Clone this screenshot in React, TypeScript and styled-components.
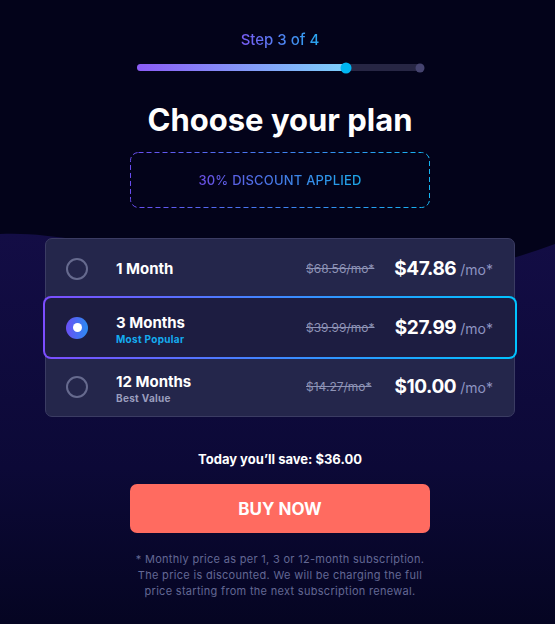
import React from 'react';
import styled, { createGlobalStyle } from 'styled-components';

const GlobalStyle = createGlobalStyle`
    html, body {
        margin: 0;
        padding: 0;
        background: #03031a;
    }
    * {
        box-sizing: border-box;
    }
`;

const Page = styled.div`
    position: relative;
    min-height: 624px;
    overflow: hidden;
    background: #03031a;
    font-family: Inter, 'Noto Sans', sans-serif;
    color: #ffffff;
`;

const Wave = styled.svg`
    position: absolute;
    left: 0;
    top: 0;
    width: 555px;
    height: 624px;
`;

const Content = styled.main`
    position: relative;
    display: flex;
    flex-direction: column;
    align-items: center;
    padding: 30px 0 0 5px;
`;

const StepLabel = styled.div`
    font-size: 15px;
    font-weight: 500;
    line-height: 20px;
    background: linear-gradient(90deg, #7a5cf5, #28a6ee);
    -webkit-background-clip: text;
    background-clip: text;
    -webkit-text-fill-color: transparent;
`;

const Track = styled.div`
    position: relative;
    width: 287px;
    height: 7px;
    margin-top: 14px;
    border-radius: 4px;
    background: #272644;
`;

const Fill = styled.div`
    height: 100%;
    border-radius: 4px;
    background: linear-gradient(90deg, #8b5cf6, #7dd0fb);
`;

const Knob = styled.span<{ $end?: boolean }>`
    position: absolute;
    top: 50%;
    width: ${({ $end }) => ($end ? '9px' : '11px')};
    height: ${({ $end }) => ($end ? '9px' : '11px')};
    border-radius: 50%;
    transform: translate(-50%, -50%);
    background: ${({ $end }) => ($end ? '#45436f' : '#00b6f2')};
`;

const Title = styled.h1`
    margin: 30px 0 0;
    font-size: 31px;
    line-height: 38px;
    font-weight: 700;
`;

const DiscountBox = styled.div`
    position: relative;
    width: 300px;
    height: 56px;
    margin-top: 13px;
    display: flex;
    align-items: center;
    justify-content: center;
`;

const DashedFrame = styled.svg`
    position: absolute;
    inset: 0;
    width: 100%;
    height: 100%;
`;

const DiscountText = styled.span`
    font-size: 13px;
    font-weight: 500;
    letter-spacing: 0.2px;
    background: linear-gradient(90deg, #6c4fe6, #1ca9ea);
    -webkit-background-clip: text;
    background-clip: text;
    -webkit-text-fill-color: transparent;
`;

const Plans = styled.div`
    width: 470px;
    margin-top: 30px;
    border: 1px solid #3b3c63;
    border-radius: 7px;
    background: #24264b;
    display: flex;
    flex-direction: column;
`;

const Row = styled.div<{ $selected?: boolean }>`
    display: grid;
    grid-template-columns: 22px 1fr 89px 98px;
    align-items: center;
    height: ${({ $selected }) => ($selected ? '63px' : '59px')};
    padding: 0 21px 0 20px;
    ${({ $selected }) =>
        $selected &&
        `
        margin: -2px -3px;
        padding: 0 22px 0 21px;
        border: 2px solid transparent;
        border-radius: 8px;
        background:
            linear-gradient(#1d1d41, #1d1d41) padding-box,
            linear-gradient(90deg, #7c4dff, #00c3ff) border-box;
        position: relative;
        z-index: 1;
    `}
`;

const Radio = styled.span<{ $checked?: boolean }>`
    width: 22px;
    height: 22px;
    border-radius: 50%;
    display: flex;
    align-items: center;
    justify-content: center;
    border: ${({ $checked }) => ($checked ? 'none' : '2px solid #666a8e')};
    background: ${({ $checked }) =>
        $checked ? 'linear-gradient(90deg, #6a4ff5, #2b8cf2)' : 'transparent'};

    &::after {
        content: '';
        display: ${({ $checked }) => ($checked ? 'block' : 'none')};
        width: 9px;
        height: 9px;
        border-radius: 50%;
        background: #ffffff;
    }
`;

const Label = styled.div<{ $withBadge?: boolean }>`
    display: flex;
    flex-direction: column;
    margin-left: 28px;
    padding-top: ${({ $withBadge }) => ($withBadge ? '4px' : '0')};
`;

const PlanName = styled.span`
    font-size: 15px;
    font-weight: 700;
    line-height: 19px;
`;

const Badge = styled.span<{ $accent?: boolean }>`
    font-size: 10px;
    font-weight: 700;
    line-height: 14px;
    letter-spacing: 0.3px;
    color: ${({ $accent }) => ($accent ? '#14acf0' : '#9a9dbd')};
`;

const OldPrice = styled.span`
    font-size: 12px;
    color: #8e93b6;
    text-decoration: line-through;
    white-space: nowrap;
`;

const Price = styled.div`
    display: flex;
    align-items: baseline;
    justify-content: flex-end;
    gap: 4px;
    white-space: nowrap;
`;

const Amount = styled.span`
    font-size: 19px;
    font-weight: 700;
    letter-spacing: -0.4px;
`;

const Per = styled.span`
    font-size: 14px;
    color: #8e94c2;
`;

const Savings = styled.p`
    margin: 33px 0 0;
    font-size: 13px;
    font-weight: 700;
    line-height: 18px;
`;

const BuyButton = styled.button`
    width: 300px;
    height: 49px;
    margin-top: 16px;
    border: none;
    border-radius: 7px;
    background: #ff6b60;
    color: #ffffff;
    font-family: inherit;
    font-size: 17px;
    font-weight: 700;
    cursor: pointer;
`;

const Footnote = styled.p`
    margin: 18px 0 0;
    font-size: 11px;
    line-height: 16px;
    text-align: center;
    color: #636894;
    letter-spacing: 0.3px;
`;

type Plan = {
    name: string;
    badge?: string;
    old: string;
    price: string;
    selected?: boolean;
};

const plans: Plan[] = [
    { name: '1 Month', old: '$68.56/mo*', price: '$47.86' },
    { name: '3 Months', badge: 'Most Popular', old: '$39.99/mo*', price: '$27.99', selected: true },
    { name: '12 Months', badge: 'Best Value', old: '$14.27/mo*', price: '$10.00' },
];

const App: React.FC = () => {
    const progress = 73;

    return (
        <Page>
            <GlobalStyle />
            <Wave viewBox="0 0 555 624" preserveAspectRatio="none">
                <defs>
                    <linearGradient id="waveFill" x1="0" y1="0" x2="0" y2="1">
                        <stop offset="0" stopColor="#130d45" />
                        <stop offset="0.6" stopColor="#0c0937" />
                        <stop offset="1" stopColor="#050522" />
                    </linearGradient>
                </defs>
                <path
                    d="M0 234 C 120 227, 330 330, 555 244 L555 624 L0 624 Z"
                    fill="url(#waveFill)"
                />
            </Wave>
            <Content>
                <StepLabel>Step 3 of 4</StepLabel>
                <Track>
                    <Fill style={{ width: `${progress}%` }} />
                    <Knob style={{ left: `${progress}%` }} />
                    <Knob $end style={{ left: 'calc(100% - 4px)' }} />
                </Track>
                <Title>Choose your plan</Title>
                <DiscountBox>
                    <DashedFrame>
                        <defs>
                            <linearGradient id="dashStroke" x1="0" y1="0" x2="1" y2="0">
                                <stop offset="0" stopColor="#6a4df0" />
                                <stop offset="1" stopColor="#16b4f0" />
                            </linearGradient>
                        </defs>
                        <rect
                            x="0.5"
                            y="0.5"
                            width="299"
                            height="55"
                            rx="8"
                            fill="none"
                            stroke="url(#dashStroke)"
                            strokeWidth="1"
                            strokeDasharray="5 3"
                        />
                    </DashedFrame>
                    <DiscountText>30% DISCOUNT APPLIED</DiscountText>
                </DiscountBox>
                <Plans>
                    {plans.map((plan) => (
                        <Row key={plan.name} $selected={plan.selected}>
                            <Radio $checked={plan.selected} />
                            <Label $withBadge={!!plan.badge}>
                                <PlanName>{plan.name}</PlanName>
                                {plan.badge && <Badge $accent={plan.selected}>{plan.badge}</Badge>}
                            </Label>
                            <OldPrice>{plan.old}</OldPrice>
                            <Price>
                                <Amount>{plan.price}</Amount>
                                <Per>/mo*</Per>
                            </Price>
                        </Row>
                    ))}
                </Plans>
                <Savings>Today you’ll save: $36.00</Savings>
                <BuyButton>BUY NOW</BuyButton>
                <Footnote>
                    * Monthly price as per 1, 3 or 12-month subscription.
                    <br />
                    The price is discounted. We will be charging the full
                    <br />
                    price starting from the next subscription renewal.
                </Footnote>
            </Content>
        </Page>
    );
};

export default App;
